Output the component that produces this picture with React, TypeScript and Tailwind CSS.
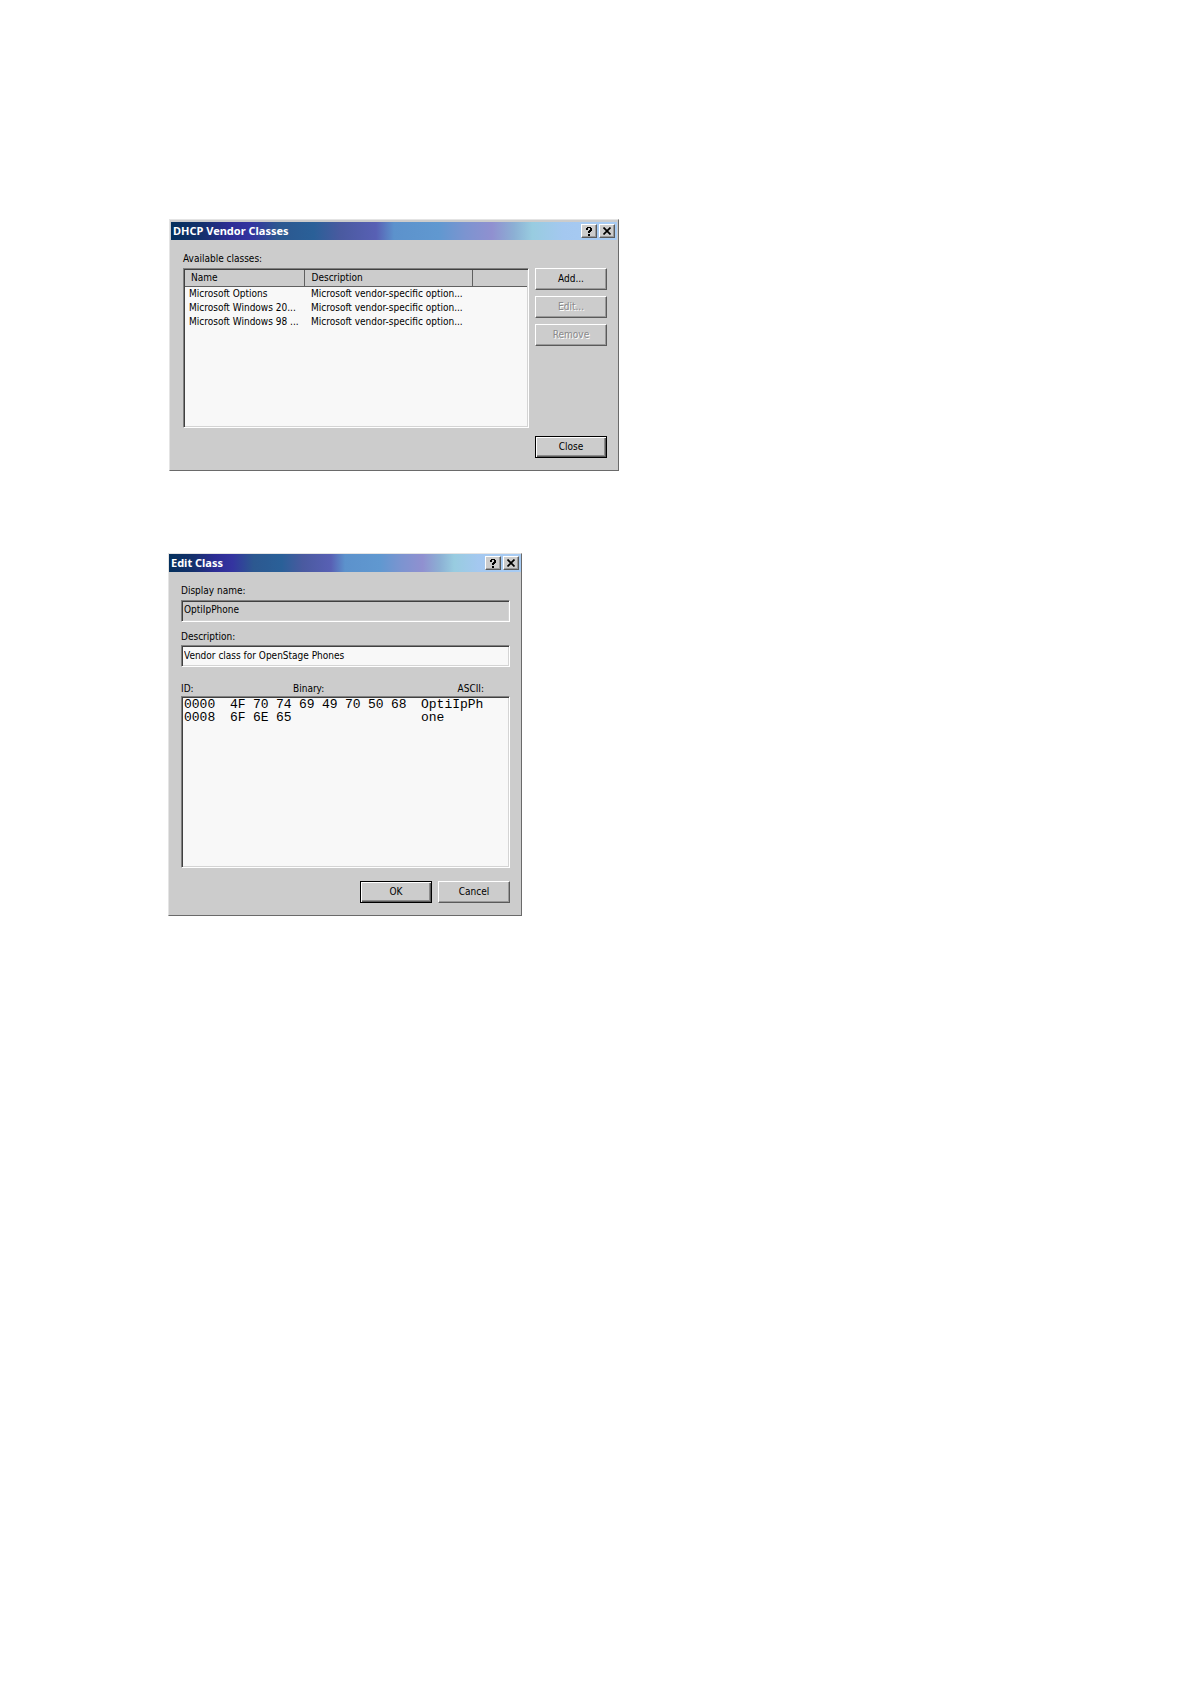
import { useState, type ReactNode } from "react";

const classes = [
  { name: "Microsoft Options", description: "Microsoft vendor-specific option..." },
  { name: "Microsoft Windows 20...", description: "Microsoft vendor-specific option..." },
  { name: "Microsoft Windows 98 ...", description: "Microsoft vendor-specific option..." },
];

const hexRows = [
  { offset: "0000", bytes: ["4F", "70", "74", "69", "49", "70", "50", "68"], ascii: "OptiIpPh" },
  { offset: "0008", bytes: ["6F", "6E", "65", "", "", "", "", ""], ascii: "one" },
];

const raised =
  "border border-t-white border-l-white border-r-[#5a5a5a] border-b-[#5a5a5a] shadow-[inset_-1px_-1px_0_#9a9a9a]";
const sunken =
  "border border-t-[#808080] border-l-[#808080] border-r-white border-b-white shadow-[inset_1px_1px_0_#404040,inset_-1px_-1px_0_#d4d4d4]";

function Button({
  children,
  disabled,
  primary,
}: {
  children: ReactNode;
  disabled?: boolean;
  primary?: boolean;
}) {
  const look = primary
    ? "border border-black shadow-[inset_1px_1px_0_#ffffff,inset_-1px_-1px_0_#5a5a5a,inset_-2px_-2px_0_#8c8c8c]"
    : raised;
  return (
    <button
      type="button"
      disabled={disabled}
      className={`flex h-[22px] w-[72px] items-center justify-center bg-[#cccccc] leading-4 disabled:text-[#8a8a8a] disabled:[text-shadow:1px_1px_0_#ffffff] ${look}`}
    >
      {children}
    </button>
  );
}

function TitleBar({ title }: { title: string }) {
  return (
    <div className="flex h-[18px] items-center bg-[linear-gradient(90deg,#04305c_0%,#14306c_7%,#2c2c94_13%,#3434a0_18%,#2c5890_24%,#2a6098_32%,#4a5aa0_38%,#5860b4_46%,#5c92cc_50%,#6098d0_60%,#7c94d0_66%,#9090d0_72%,#8cb0d4_77%,#98cce0_81%,#a4c8f0_88%,#a8ccf4_100%)] px-[2px]">
      <h2 className="flex-1 font-['Noto_Sans',sans-serif] text-[11px] font-bold text-white">{title}</h2>
      <div className="flex gap-[2px]">
        <button type="button" aria-label="Help" className={`flex h-[14px] w-4 items-center justify-center bg-[#cccccc] ${raised}`}>
          <svg viewBox="0 0 8 9" className="h-[9px] w-2" shapeRendering="crispEdges">
            <path d="M2 0h4v1h1v3h-1v1h-1v1h-2v-2h1v-1h1v-2h-2v2h-2v-2h1zM3 7h2v2h-2z" />
          </svg>
        </button>
        <button type="button" aria-label="Close" className={`flex h-[14px] w-4 items-center justify-center bg-[#cccccc] ${raised}`}>
          <svg viewBox="0 0 8 8" className="h-2 w-2">
            <path d="M0.5 0.5L7.5 7.5M7.5 0.5L0.5 7.5" stroke="black" strokeWidth="1.7" />
          </svg>
        </button>
      </div>
    </div>
  );
}

function Dialog({ title, className, children }: { title: string; className: string; children: ReactNode }) {
  return (
    <section
      aria-label={title}
      className={`flex w-full flex-col border border-t-[#e4e4e4] border-l-[#e4e4e4] border-r-[#6a6a6a] border-b-[#6a6a6a] bg-[#cccccc] ${className}`}
    >
      <TitleBar title={title} />
      {children}
    </section>
  );
}

function VendorClasses() {
  return (
    <Dialog title="DHCP Vendor Classes" className="ml-px max-w-[450px] px-px pt-[2px]">
      <div className="flex flex-col pt-[11px] pr-[10px] pb-3 pl-3">
        <div className="mb-px leading-4">Available classes:</div>
        <div className="flex gap-[6px]">
          <div className={`h-[160px] flex-1 bg-[#f8f8f8] p-px ${sunken}`}>
            <table className="w-full table-fixed border-collapse text-left">
              <thead>
                <tr className="h-4 bg-[#cccccc] leading-4">
                  <th className="w-[119px] border-r border-b border-[#606060] pl-[6px] font-normal">Name</th>
                  <th className="w-[168px] border-r border-b border-[#606060] pl-[7px] font-normal">Description</th>
                  <th className="border-b border-[#606060]"></th>
                </tr>
              </thead>
              <tbody className="leading-[14px] whitespace-nowrap">
                {classes.map((c) => (
                  <tr key={c.name}>
                    <td className="pl-1">{c.name}</td>
                    <td className="pl-[7px]">{c.description}</td>
                    <td></td>
                  </tr>
                ))}
              </tbody>
            </table>
          </div>
          <div className="flex flex-col gap-[6px]">
            <Button>Add...</Button>
            <Button disabled>Edit...</Button>
            <Button disabled>Remove</Button>
          </div>
        </div>
        <div className="mt-2 flex justify-end">
          <Button primary>Close</Button>
        </div>
      </div>
    </Dialog>
  );
}

function EditClass() {
  const [description, setDescription] = useState("Vendor class for OpenStage Phones");
  return (
    <Dialog title="Edit Class" className="max-w-[354px]">
      <div className="flex flex-col pt-[11px] pr-[11px] pb-3 pl-3">
        <label htmlFor="display-name" className="mb-px leading-4">
          Display name:
        </label>
        <input id="display-name" readOnly value="OptiIpPhone" className={`h-[22px] bg-[#cccccc] px-[2px] pb-1 ${sunken}`} />
        <label htmlFor="description" className="mt-[7px] leading-4">
          Description:
        </label>
        <input
          id="description"
          value={description}
          onChange={(e) => setDescription(e.target.value)}
          className={`h-[22px] bg-[#f8f8f8] px-[2px] pb-[2px] ${sunken}`}
        />
        <div className="mt-[14px] -mb-px flex leading-4">
          <span className="w-28">ID:</span>
          <span className="flex-1">Binary:</span>
          <span className="pr-[26px]">ASCII:</span>
        </div>
        <div className={`h-[172px] bg-[#f8f8f8] px-[2px] py-px ${sunken}`}>
          <table className="table-fixed border-collapse font-['Liberation_Mono',monospace] text-[13px] leading-[13px]">
            <tbody>
              {hexRows.map((row) => (
                <tr key={row.offset}>
                  <td className="w-[46px]">{row.offset}</td>
                  {row.bytes.map((b, i) => (
                    <td key={i} className="w-[23px]">{b}</td>
                  ))}
                  <td className="pl-[7px]">{row.ascii}</td>
                </tr>
              ))}
            </tbody>
          </table>
        </div>
        <div className="mt-[13px] flex justify-end gap-[6px]">
          <Button primary>OK</Button>
          <Button>Cancel</Button>
        </div>
      </div>
    </Dialog>
  );
}

export default function App() {
  return (
    <main className="flex min-h-screen flex-col gap-[82px] bg-white px-[168px] pt-[219px] font-['DejaVu_Sans_Condensed','Liberation_Sans',sans-serif] text-[10px] text-black">
      <VendorClasses />
      <EditClass />
    </main>
  );
}
